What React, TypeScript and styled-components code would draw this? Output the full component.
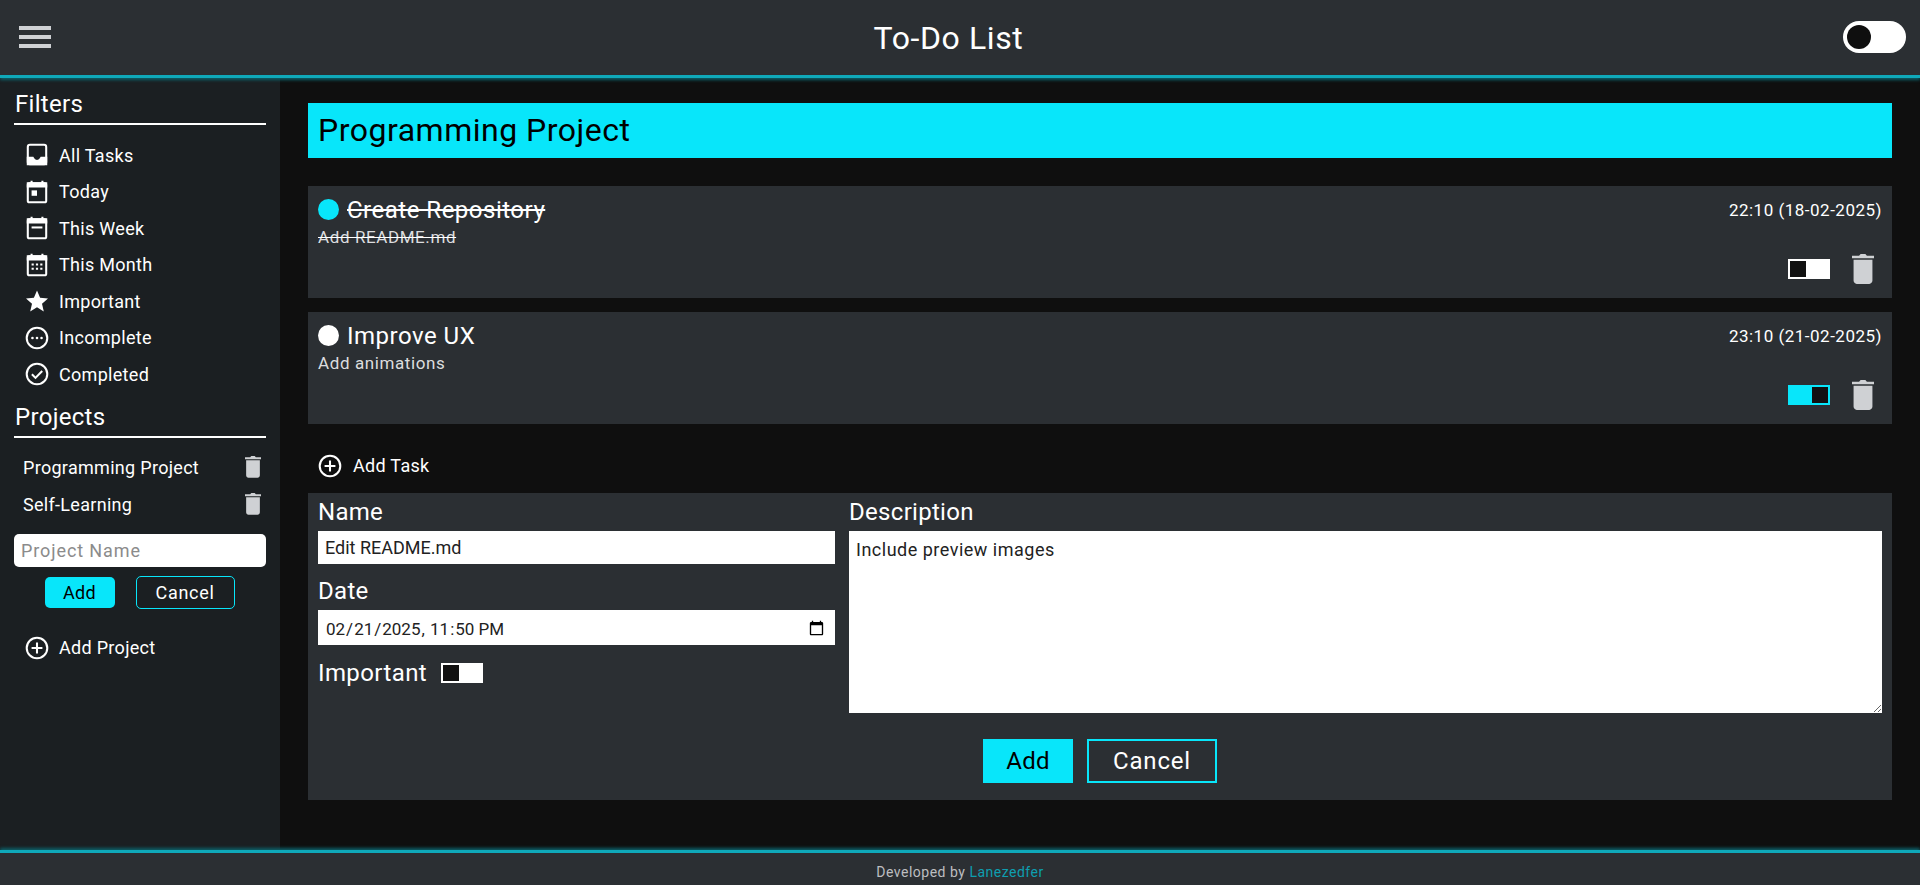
import React from 'react'
import styled, { createGlobalStyle } from 'styled-components'

const CYAN = '#08e6fa'
const PANEL = '#2b2f33'
const FONT = `Roboto, "Liberation Sans", sans-serif`

const GlobalStyle = createGlobalStyle`
  html, body { margin: 0; padding: 0; background: #0f0f0f; }
  * { box-sizing: border-box; }
  body { font-family: ${FONT}; color: #fff; }
`

const Page = styled.div`
  height: 885px;
  display: flex;
  flex-direction: column;
  overflow: hidden;
`

const Header = styled.header`
  height: 78px;
  flex: none;
  background: ${PANEL};
  border-bottom: 3px solid #0fa9ba;
  box-shadow: 0 2px 3px #0c5f68;
  display: flex;
  align-items: center;
  justify-content: space-between;
  padding: 0 14px 1px 19px;
  position: relative;
  z-index: 1;
`

const Title = styled.h1`
  margin: 2px 0 0 3px;
  font-size: 32px;
  font-weight: 400;
  letter-spacing: 0.6px;
`

const Burger = styled.div`
  width: 32px;
  display: flex;
  flex-direction: column;
  gap: 5.400px;
  span {
    display: block;
    height: 3.600px;
    background: #cfd1d4;
  }
`

const ThemeSwitch = styled.div`
  width: 63px;
  height: 32px;
  border-radius: 16px;
  background: #fff;
  padding: 4px;
  i {
    display: block;
    width: 24px;
    height: 24px;
    border-radius: 50%;
    background: #0f0f0f;
  }
`

const Body = styled.div`
  flex: 1;
  display: flex;
  min-height: 0;
`

const Sidebar = styled.aside`
  width: 280px;
  flex: none;
  background: #1b1f22;
  padding: 8px 14px 0;
`

const SideHeading = styled.h2`
  margin: 0;
  height: 39px;
  font-size: 24px;
  line-height: 36px;
  font-weight: 400;
  letter-spacing: 0.3px;
  padding-left: 1px;
  border-bottom: 2px solid #fff;
`

const FilterList = styled.div`
  margin: 12px 0 6px;
`

const NavRow = styled.div`
  height: 36.500px;
  display: flex;
  align-items: center;
  gap: 9px;
  padding-left: 10px;
  font-size: 18px;
  letter-spacing: 0.3px;
  svg { flex: none; }
`

const ProjectList = styled.div`
  margin: 11px 0 11px;
`

const ProjectRow = styled.div`
  height: 37px;
  display: flex;
  align-items: center;
  justify-content: space-between;
  padding: 0 5px 0 9px;
  font-size: 18px;
  letter-spacing: 0.3px;
`

const ProjectInput = styled.input`
  display: block;
  width: 100%;
  height: 33px;
  border: 0;
  border-radius: 5px;
  background: #fff;
  padding: 0 7px;
  font: 18px ${FONT};
  letter-spacing: 0.9px;
  outline: none;
  &::placeholder { color: #8b8b8b; opacity: 1; }
`

const ProjectButtons = styled.div`
  display: flex;
  justify-content: center;
  align-items: center;
  gap: 21px;
  margin: 9px 0 21px;
  padding-right: 1px;
`

const SmallAdd = styled.button`
  width: 70px;
  height: 31px;
  padding: 0;
  border: 0;
  border-radius: 5px;
  background: ${CYAN};
  color: #000;
  font: 18px ${FONT};
  letter-spacing: 0.3px;
`

const SmallCancel = styled.button`
  width: 99px;
  height: 33px;
  padding: 0;
  border: 1px solid ${CYAN};
  border-radius: 5px;
  background: transparent;
  color: #fff;
  font: 18px ${FONT};
  letter-spacing: 0.7px;
`

const Main = styled.main`
  flex: 1;
  background: #0f0f0f;
  padding: 25px 28px 0;
  min-width: 0;
`

const Banner = styled.h2`
  margin: 0 0 28px;
  height: 55px;
  background: ${CYAN};
  color: #000;
  padding: 0 10px;
  font-size: 32px;
  line-height: 55px;
  font-weight: 400;
  letter-spacing: 0.5px;
`

const TaskCard = styled.section`
  height: 112px;
  margin-bottom: 14px;
  background: ${PANEL};
  padding: 9px 10px 10px;
  display: flex;
  justify-content: space-between;
`

const TaskInfo = styled.div<{ $done?: boolean }>`
  text-decoration: ${p => (p.$done ? 'line-through' : 'none')};
`

const TaskName = styled.div`
  display: flex;
  align-items: center;
  gap: 8px;
  height: 29px;
  font-size: 24px;
  letter-spacing: 0.5px;
`

const Dot = styled.i<{ $on?: boolean }>`
  display: block;
  width: 21px;
  height: 21px;
  border-radius: 50%;
  background: ${p => (p.$on ? CYAN : '#fff')};
`

const TaskDesc = styled.div`
  margin-top: 3px;
  font-size: 17px;
  line-height: 20px;
  letter-spacing: 0.6px;
  color: #dcdddf;
`

const TaskSide = styled.div`
  display: flex;
  flex-direction: column;
  align-items: flex-end;
  justify-content: space-between;
`

const TaskTime = styled.div`
  margin-top: 3px;
  font-size: 17px;
  line-height: 24px;
  letter-spacing: 0.5px;
`

const TaskActions = styled.div`
  display: flex;
  align-items: center;
  gap: 22px;
  margin: 0 8px 4px 0;
`

const SquareToggle = styled.div<{ $on?: boolean }>`
  width: 42px;
  height: 20px;
  padding: 2px;
  background: ${p => (p.$on ? CYAN : '#fff')};
  display: flex;
  justify-content: ${p => (p.$on ? 'flex-end' : 'flex-start')};
  i {
    display: block;
    width: 16px;
    height: 16px;
    background: #111;
  }
`

const AddTaskRow = styled.div`
  height: 55px;
  display: flex;
  align-items: center;
  gap: 10px;
  padding-left: 9px;
  font-size: 18px;
  letter-spacing: 0.3px;
`

const TaskForm = styled.form`
  background: ${PANEL};
  height: 307px;
  padding: 0 10px;
`

const FormColumns = styled.div`
  display: grid;
  grid-template-columns: 517px 1033px;
  column-gap: 14px;
`

const Label = styled.label`
  display: block;
  font-size: 24px;
  line-height: 38px;
  letter-spacing: 0.3px;
`

const TextField = styled.input`
  display: block;
  width: 100%;
  height: 33px;
  border: 0;
  background: #fff;
  color: #222;
  padding: 0 7px;
  font: 18px ${FONT};
  letter-spacing: 0;
  border-radius: 0;
`

const DateField = styled(TextField)`
  height: 35px;
  padding: 2px 8px 0 7px;
  font-size: 17px;
  color-scheme: light;
`

const DateLabel = styled(Label)`
  margin-top: 9px;
  line-height: 37px;
`

const ImportantRow = styled.div`
  display: flex;
  align-items: center;
  gap: 14px;
  margin-top: 9px;
  height: 38px;
`

const ImportantLabel = styled.span`
  font-size: 24px;
  letter-spacing: 0.4px;
`

const DescField = styled.textarea`
  display: block;
  width: 100%;
  height: 182px;
  border: 0;
  background: #fff;
  color: #222;
  padding: 8px 7px;
  font: 18px ${FONT};
  letter-spacing: 0.5px;
  border-radius: 0;
  resize: vertical;
`

const FormButtons = styled.div`
  display: flex;
  justify-content: center;
  gap: 14px;
  margin-top: 26px;
`

const BigAdd = styled.button`
  width: 90px;
  height: 44px;
  padding: 0;
  border: 0;
  background: ${CYAN};
  color: #000;
  font: 24px ${FONT};
  letter-spacing: 0.3px;
`

const BigCancel = styled.button`
  width: 130px;
  height: 44px;
  padding: 0;
  border: 2px solid ${CYAN};
  background: transparent;
  color: #fff;
  font: 24px ${FONT};
  letter-spacing: 0.8px;
`

const Footer = styled.footer`
  height: 35px;
  flex: none;
  background: ${PANEL};
  border-top: 3px solid #0fa9ba;
  box-shadow: 0 -2px 3px #0c5f68;
  display: flex;
  align-items: center;
  justify-content: center;
  padding-top: 5px;
  font-size: 14px;
  letter-spacing: 0.5px;
  color: #bdbec0;
  position: relative;
  a { color: #0e9fb0; text-decoration: none; margin-left: 4px; }
`

type IconProps = { size?: number; color?: string }

const Trash = ({ size = 22, color = '#cfd1d4' }: IconProps) => (
  <svg width={size} height={size * 1.36} viewBox="5 3 14 18" preserveAspectRatio="none" fill={color}>
    <path d="M6 19c0 1.100.9 2 2 2h8c1.100 0 2-.9 2-2V6.500H6V19zM19 4h-4.500l-1-1h-3l-1 1H5v1.600h14V4z" />
  </svg>
)

const Icon = ({ children }: { children: React.ReactNode }) => (
  <svg width="26" height="26" viewBox="0 0 24 24" fill="none" stroke="#fff" strokeWidth="1.900">
    {children}
  </svg>
)

const InboxIcon = () => (
  <Icon>
    <rect x="3.500" y="2.500" width="17" height="18" rx="2" />
    <path d="M3.500 14.500h4.500c1 2.300 2.300 3 4 3s3-.7 4-3h4.500v6h-17z" fill="#fff" />
  </Icon>
)

const CalendarFrame = ({ children }: { children: React.ReactNode }) => (
  <Icon>
    <rect x="3.500" y="4" width="17" height="17.500" rx="1.500" />
    <path d="M3.500 4h17v3h-17zM7 1.500v3M17 1.500v3" fill="#fff" />
    {children}
  </Icon>
)

const TodayIcon = () => (
  <CalendarFrame>
    <rect x="7" y="10.500" width="5" height="5" fill="#fff" stroke="none" />
  </CalendarFrame>
)

const WeekIcon = () => (
  <CalendarFrame>
    <path d="M7 11.500h10" />
  </CalendarFrame>
)

const MonthIcon = () => (
  <CalendarFrame>
    <path d="M7 11.500h2M11 11.500h2M15 11.500h2M7 15.500h2M11 15.500h2M15 15.500h2" />
  </CalendarFrame>
)

const StarIcon = () => (
  <svg width="26" height="26" viewBox="-1 -1 26 26" fill="#fff">
    <path d="M12 1.500l3.100 7.300 7.900.7-6 5.200 1.800 7.800L12 18.300l-6.800 4.200L7 14.700 1 9.500l7.900-.7z" />
  </svg>
)

const PendingIcon = () => (
  <Icon>
    <circle cx="12" cy="12" r="9.500" />
    <circle cx="7.800" cy="12" r="1.200" fill="#fff" stroke="none" />
    <circle cx="12" cy="12" r="1.200" fill="#fff" stroke="none" />
    <circle cx="16.200" cy="12" r="1.200" fill="#fff" stroke="none" />
  </Icon>
)

const DoneIcon = () => (
  <Icon>
    <circle cx="12" cy="12" r="9.500" />
    <path d="M7.300 12.300l3.300 3.300 6.200-6.400" />
  </Icon>
)

const PlusIcon = () => (
  <Icon>
    <circle cx="12" cy="12" r="9.500" />
    <path d="M12 7v10M7 12h10" />
  </Icon>
)

const filters: [string, React.ReactNode][] = [
  ['All Tasks', <InboxIcon />],
  ['Today', <TodayIcon />],
  ['This Week', <WeekIcon />],
  ['This Month', <MonthIcon />],
  ['Important', <StarIcon />],
  ['Incomplete', <PendingIcon />],
  ['Completed', <DoneIcon />],
]

const tasks = [
  { name: 'Create Repository', desc: 'Add README.md', time: '22:10 (18-02-2025)', done: true, important: false },
  { name: 'Improve UX', desc: 'Add animations', time: '23:10 (21-02-2025)', done: false, important: true },
]

export default function App() {
  return (
    <Page>
      <GlobalStyle />
      <Header>
        <Burger><span /><span /><span /></Burger>
        <Title>To-Do List</Title>
        <ThemeSwitch><i /></ThemeSwitch>
      </Header>
      <Body>
        <Sidebar>
          <SideHeading>Filters</SideHeading>
          <FilterList>
            {filters.map(([label, icon]) => (
              <NavRow key={label}>{icon}{label}</NavRow>
            ))}
          </FilterList>
          <SideHeading>Projects</SideHeading>
          <ProjectList>
            <ProjectRow>Programming Project<Trash size={16} /></ProjectRow>
            <ProjectRow>Self-Learning<Trash size={16} /></ProjectRow>
          </ProjectList>
          <ProjectInput placeholder="Project Name" />
          <ProjectButtons>
            <SmallAdd type="button">Add</SmallAdd>
            <SmallCancel type="button">Cancel</SmallCancel>
          </ProjectButtons>
          <NavRow><PlusIcon />Add Project</NavRow>
        </Sidebar>
        <Main>
          <Banner>Programming Project</Banner>
          {tasks.map(t => (
            <TaskCard key={t.name}>
              <TaskInfo $done={t.done}>
                <TaskName>
                  <Dot $on={t.done} />
                  {t.name}
                </TaskName>
                <TaskDesc>{t.desc}</TaskDesc>
              </TaskInfo>
              <TaskSide>
                <TaskTime>{t.time}</TaskTime>
                <TaskActions>
                  <SquareToggle $on={t.important}><i /></SquareToggle>
                  <Trash />
                </TaskActions>
              </TaskSide>
            </TaskCard>
          ))}
          <AddTaskRow><PlusIcon />Add Task</AddTaskRow>
          <TaskForm>
            <FormColumns>
              <div>
                <Label>Name</Label>
                <TextField defaultValue="Edit README.md" />
                <DateLabel>Date</DateLabel>
                <DateField type="datetime-local" defaultValue="2025-02-21T23:50" />
                <ImportantRow>
                  <ImportantLabel>Important</ImportantLabel>
                  <SquareToggle><i /></SquareToggle>
                </ImportantRow>
              </div>
              <div>
                <Label>Description</Label>
                <DescField defaultValue="Include preview images" />
              </div>
            </FormColumns>
            <FormButtons>
              <BigAdd type="button">Add</BigAdd>
              <BigCancel type="button">Cancel</BigCancel>
            </FormButtons>
          </TaskForm>
        </Main>
      </Body>
      <Footer>Developed by<a>Lanezedfer</a></Footer>
    </Page>
  )
}
